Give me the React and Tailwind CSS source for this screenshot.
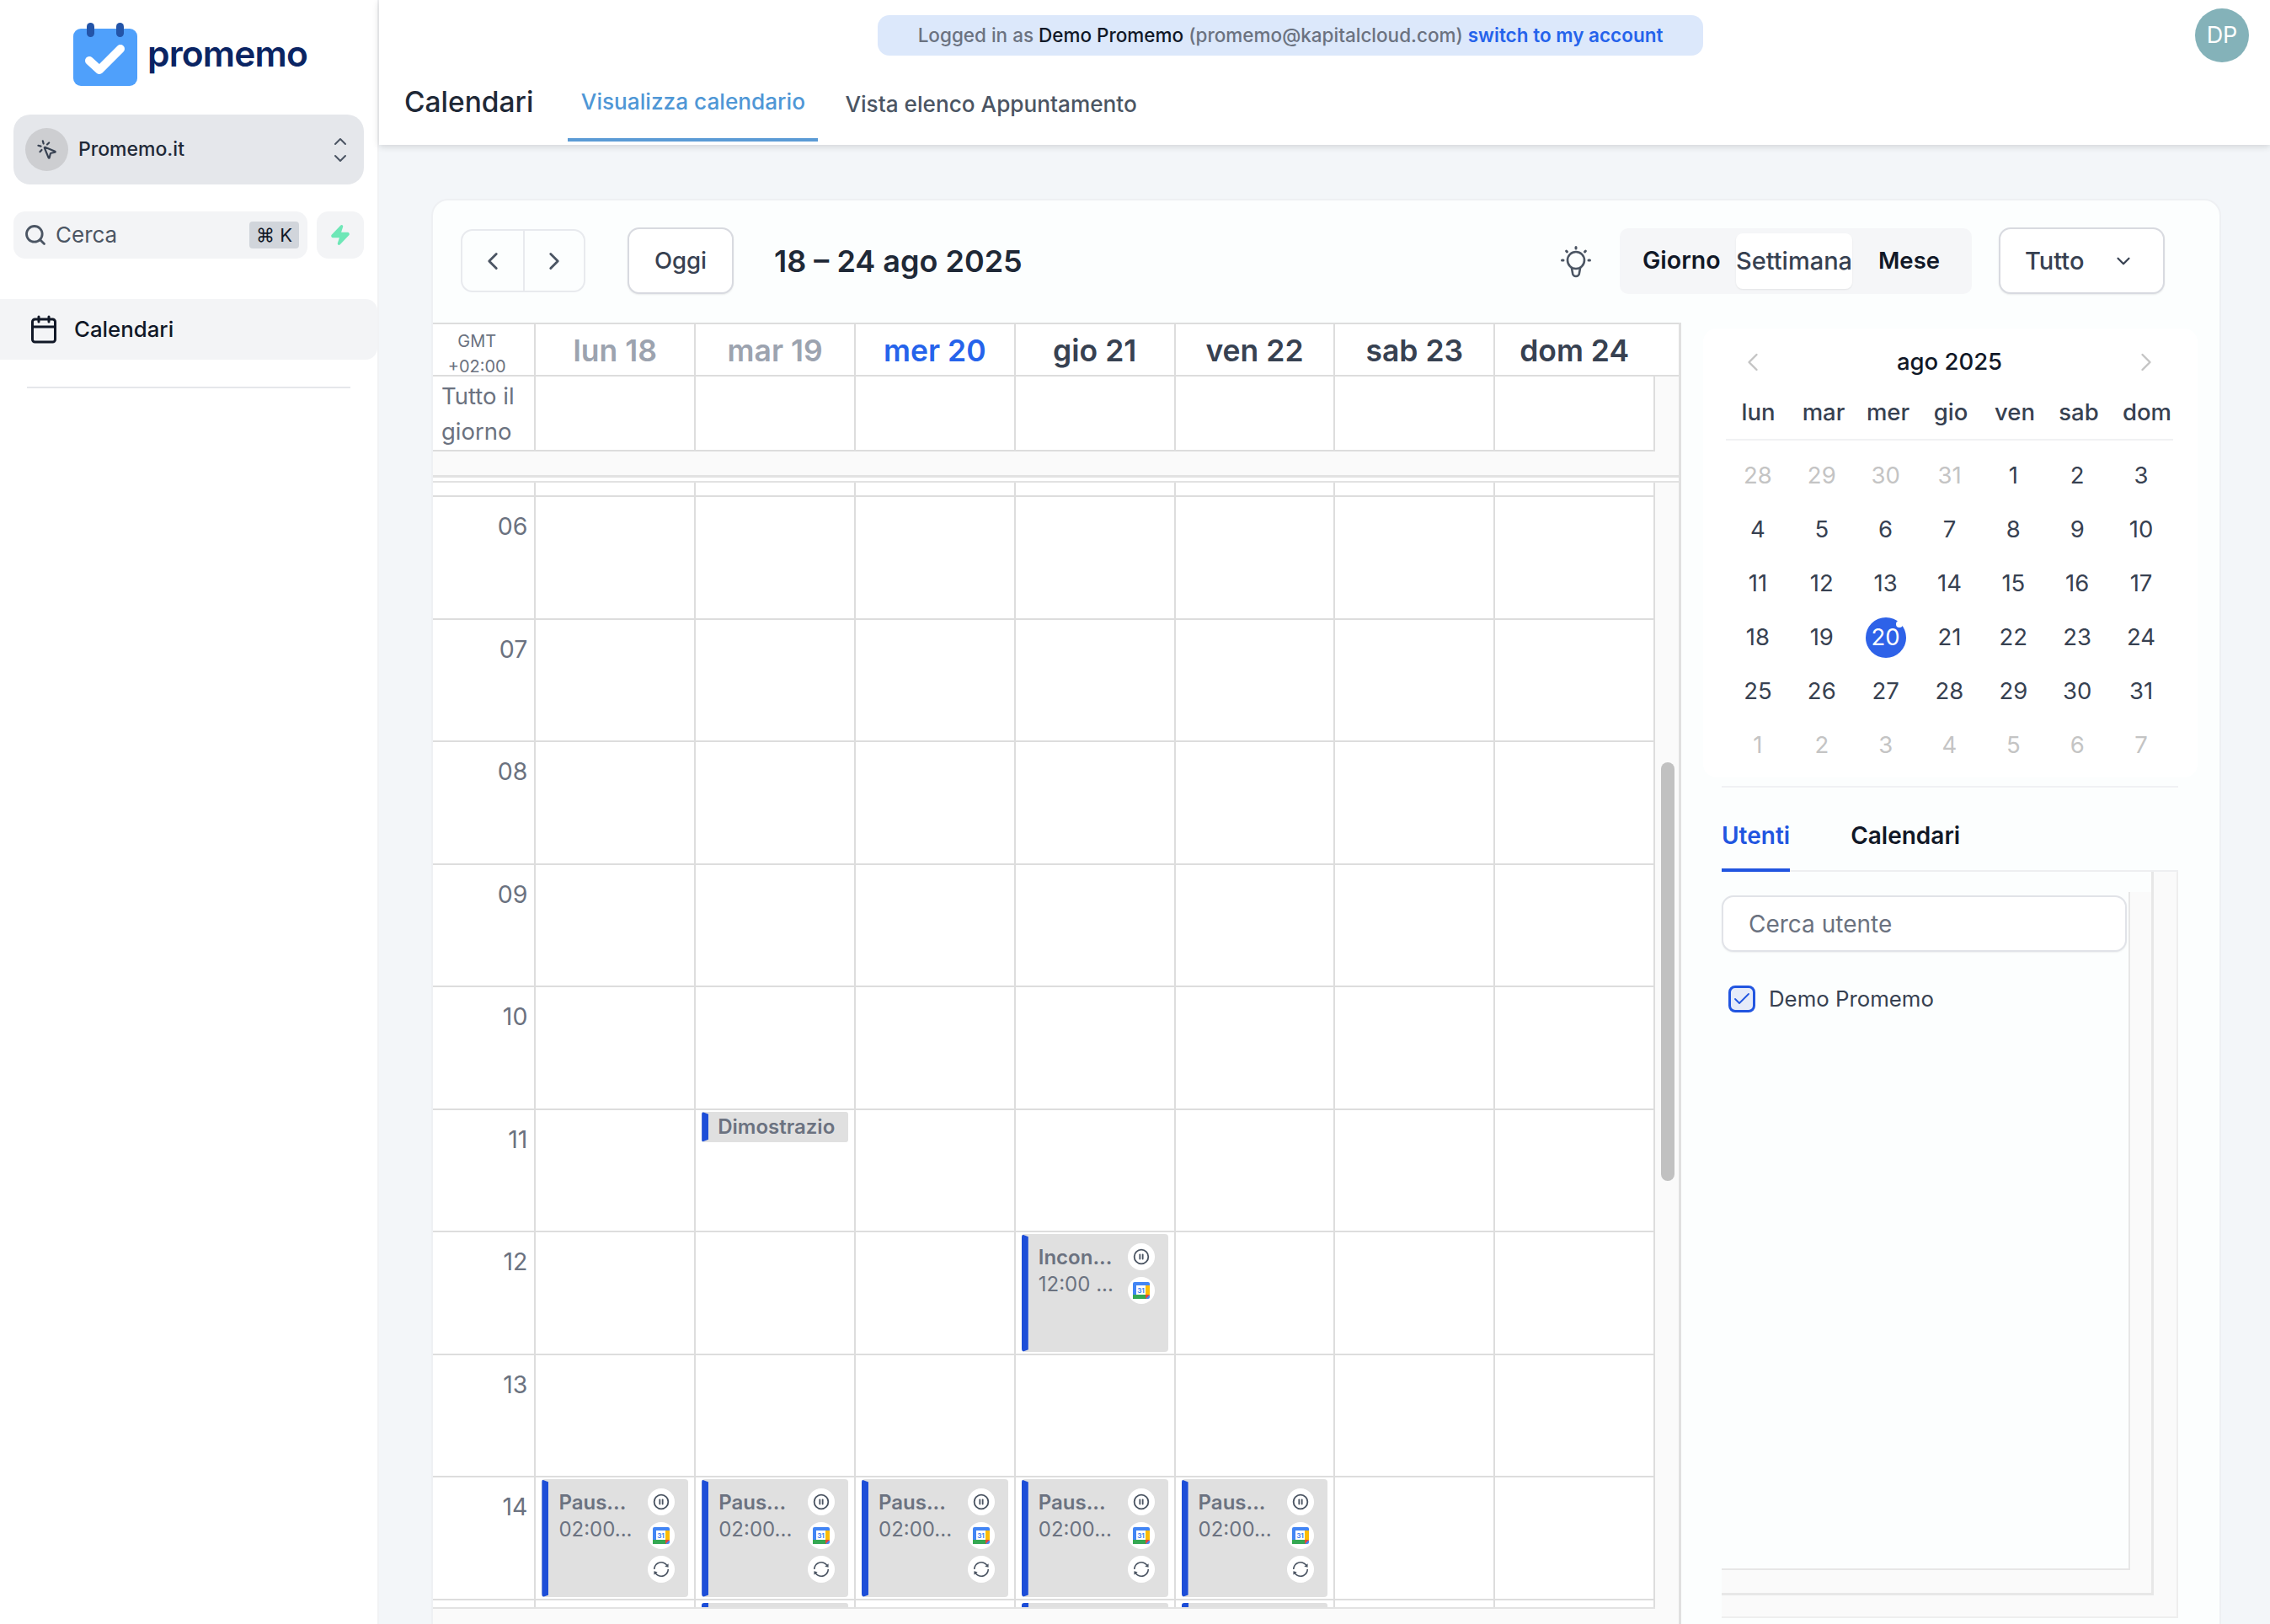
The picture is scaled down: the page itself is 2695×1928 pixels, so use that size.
import React from 'react';
import { Search, MousePointerClick, ChevronUp, ChevronDown, ChevronLeft, ChevronRight, Zap, Calendar, CirclePause, Check } from 'lucide-react';
import { AiOutlineSync } from 'react-icons/ai';

const HOURS = ['06', '07', '08', '09', '10', '11', '12', '13', '14'];
const DAYS = [
  { label: 'lun 18', color: 'text-[#9ca3af]' },
  { label: 'mar 19', color: 'text-[#9ca3af]' },
  { label: 'mer 20', color: 'text-[#2563eb]' },
  { label: 'gio 21', color: 'text-[#374151]' },
  { label: 'ven 22', color: 'text-[#374151]' },
  { label: 'sab 23', color: 'text-[#374151]' },
  { label: 'dom 24', color: 'text-[#374151]' },
];
const MONTH = [
  [['28', 1], ['29', 1], ['30', 1], ['31', 1], ['1'], ['2'], ['3']],
  [['4'], ['5'], ['6'], ['7'], ['8'], ['9'], ['10']],
  [['11'], ['12'], ['13'], ['14'], ['15'], ['16'], ['17']],
  [['18'], ['19'], ['20'], ['21'], ['22'], ['23'], ['24']],
  [['25'], ['26'], ['27'], ['28'], ['29'], ['30'], ['31']],
  [['1', 1], ['2', 1], ['3', 1], ['4', 1], ['5', 1], ['6', 1], ['7', 1]],
];

function GCal() {
  return (
    <svg width="20" height="20" viewBox="0 0 20 20">
      <rect x="0" y="0" width="20" height="20" rx="2" fill="#4285f4" />
      <rect x="15" y="4" width="5" height="12" fill="#fbbc04" />
      <rect x="0" y="15" width="16" height="5" fill="#34a853" />
      <path d="M15 15h5l-5 5z" fill="#ea4335" />
      <rect x="4" y="4" width="11" height="11" fill="#ffffff" />
      <text x="9.5" y="12.5" fontSize="8" fontWeight="700" textAnchor="middle" fill="#4285f4" fontFamily="Inter, sans-serif">31</text>
    </svg>
  );
}

function Bulb() {
  return (
    <svg width="40" height="40" viewBox="0 0 40 40" className="ml-[637px] shrink-0 text-[#4b5563]" fill="none" stroke="currentColor" strokeLinecap="round">
      <circle cx="20" cy="19" r="10" strokeWidth="2.6" />
      <path d="M15 28.5 L16 34 A4 4 0 0 0 24 34 L25 28.5" strokeWidth="2.6" />
      <path d="M20 3.5v1.4M8.6 8l.9 1M31.4 8l-.9 1M3.5 19H5M35 19h1.5" strokeWidth="3" />
    </svg>
  );
}

function Badge({ children }) {
  return <div className="w-[32px] h-[32px] rounded-full bg-white flex items-center justify-center text-[#4b5563]">{children}</div>;
}

const BAR = 'w-[8px] shrink-0 bg-[#1d4ed8] [clip-path:polygon(0_0,100%_3px,100%_calc(100%-3px),0_100%)]';

function Event({ title, time, sync }) {
  return (
    <div className="absolute left-[7px] right-[7px] top-[2px] h-[140px] rounded-[4px] bg-[#e0e0e0] ring-2 ring-white overflow-hidden flex z-10">
      <div className={BAR} />
      <div className="flex-1 pl-[12px] pt-[12px] text-[24px] leading-[32px] text-[#6b7280]">
        <div className="font-semibold whitespace-nowrap">{title}</div>
        <div className="whitespace-nowrap">{time}</div>
      </div>
      <div className="w-[48px] shrink-0 pt-[11px] flex flex-col gap-[8px]">
        <Badge><CirclePause size={20} strokeWidth={2.2} /></Badge>
        <Badge><GCal /></Badge>
        {sync && <Badge><AiOutlineSync size={22} /></Badge>}
      </div>
    </div>
  );
}

function cellEvent(hour, day) {
  if (hour === '11' && day === 1) {
    return (
      <div className="absolute left-[7px] right-[7px] top-[2px] h-[36px] rounded-[3px] bg-[#e0e0e0] flex overflow-hidden z-10">
        <div className={BAR} />
        <div className="pl-[11px] text-[24px] leading-[36px] font-semibold text-[#6b7280] whitespace-nowrap">Dimostrazio</div>
      </div>
    );
  }
  if (hour === '12' && day === 3) return <Event title="Incon..." time="12:00 ..." />;
  if (hour === '14' && day < 5) return <Event title="Paus..." time="02:00..." sync />;
  return null;
}

function Sidebar() {
  return (
    <aside className="w-[450px] h-full shrink-0 bg-white flex flex-col border-r-2 border-[#f1f2f4]">
      <div className="h-[136px] shrink-0 pl-[87px] pt-[27px] flex items-start gap-[12px]">
        <svg width="76" height="75" viewBox="0 0 76 75" className="shrink-0">
          <rect x="0" y="7" width="76" height="68" rx="9" fill="#4fa0fb" />
          <rect x="16" y="0" width="9" height="17" rx="4.5" fill="#2354a8" />
          <rect x="51" y="0" width="9" height="17" rx="4.5" fill="#2354a8" />
          <path d="M19 45 L31 56 L56 31" fill="none" stroke="#ffffff" strokeWidth="10" strokeLinecap="round" strokeLinejoin="round" />
        </svg>
        <span className="font-semibold text-[42.5px] leading-[74px] tracking-[-0.02em] text-[#0a2463]">promemo</span>
      </div>
      <button className="mx-[16px] h-[83px] shrink-0 rounded-[20px] bg-[#e5e7eb] flex items-center pl-[14px] pr-[16px]">
        <span className="w-[51px] h-[51px] rounded-full bg-[#cdced1] flex items-center justify-center text-[#374151]">
          <MousePointerClick size={26} strokeWidth={2} />
        </span>
        <span className="ml-[12px] text-[23px] font-medium text-[#1f2937]">Promemo.it</span>
        <span className="ml-auto flex flex-col text-[#4b5563]">
          <ChevronUp size={24} strokeWidth={2} className="-mb-[2px]" />
          <ChevronDown size={24} strokeWidth={2} className="-mt-[2px]" />
        </span>
      </button>
      <div className="mx-[16px] mt-[32px] flex gap-[11px]">
        <div className="w-[349px] h-[56px] rounded-[14px] bg-[#f3f4f6] flex items-center pl-[12px] pr-[10px] text-[#4b5563]">
          <Search size={28} strokeWidth={2.4} />
          <span className="ml-[10px] text-[26px] leading-[30px] pb-[1px]">Cerca</span>
          <span className="ml-auto h-[32px] w-[59px] rounded-[4px] bg-[#d1d5db] flex items-center justify-center text-[22px] text-[#111827]">⌘ K</span>
        </div>
        <div className="w-[56px] h-[56px] rounded-[14px] bg-[#f3f4f6] flex items-center justify-center">
          <Zap size={26} className="text-[#6ee7b7] fill-[#6ee7b7]" />
        </div>
      </div>
      <div className="mt-[48px] h-[72px] rounded-r-[14px] bg-[#f3f4f6] flex items-center pl-[34px]">
        <Calendar size={36} strokeWidth={2} className="text-[#111827]" />
        <span className="ml-[18px] text-[25.8px] font-medium text-[#111827]">Calendari</span>
      </div>
      <div className="mx-[32px] mt-[32px] h-[2px] bg-[#e5e7eb]" />
    </aside>
  );
}

function Header() {
  return (
    <header className="relative z-20 h-[172px] shrink-0 bg-white shadow-[0_2px_8px_rgba(0,0,0,0.14)] flex flex-col">
      <div className="h-[92px] flex items-start shrink-0 relative">
        <div className="mt-[18px] ml-[592px] w-[980px] h-[48px] rounded-[14px] bg-[#dce8fb] flex items-center justify-center text-[22.5px] font-medium text-[#6b7280] whitespace-nowrap">
          <span>Logged in as&nbsp;</span><span className="text-[#111827]">Demo Promemo</span><span>&nbsp;(promemo@kapitalcloud.com)&nbsp;</span><span className="text-[#2563eb] font-semibold">switch to my account</span>
        </div>
        <div className="absolute top-[10px] left-[2156px] w-[64px] h-[64px] rounded-full bg-[#84b2b9] flex items-center justify-center text-white text-[27px]">DP</div>
      </div>
      <div className="flex-1 flex items-stretch pl-[30px]">
        <h1 className="text-[33.5px] font-medium text-[#1f2937] leading-[58px]">Calendari</h1>
        <div className="ml-[41px] w-[297px] h-[76px] border-b-[4px] border-[#5b9bd5] text-[26.2px] font-medium text-[#4f97d6] flex items-start justify-center pt-[12px] leading-[34px]">Visualizza calendario</div>
        <div className="ml-[32px] text-[26.2px] font-medium text-[#4b5563] pt-[14px] leading-[36px]">Vista elenco Appuntamento</div>
      </div>
    </header>
  );
}

function Toolbar() {
  return (
    <div className="h-[145px] shrink-0 flex items-center pl-[33px] pb-[2px] text-[27.5px]">
      <div className="flex w-[148px] h-[75px] rounded-[14px] border-2 border-[#e8eaee] text-[#4b5563]">
        <div className="w-[74px] border-r-2 border-[#e8eaee] flex items-center justify-center"><ChevronLeft size={34} strokeWidth={2} /></div>
        <div className="flex-1 flex items-center justify-center"><ChevronRight size={34} strokeWidth={2} /></div>
      </div>
      <div className="ml-[50px] w-[126px] h-[79px] rounded-[14px] border-2 border-[#d8dae0] bg-white shadow-[0_1px_2px_rgba(0,0,0,0.08)] flex items-center justify-center font-medium text-[#374151]">Oggi</div>
      <div className="ml-[48px] w-[295px] text-[36px] font-semibold text-[#1f2937] whitespace-nowrap">18 – 24 ago 2025</div>
      <Bulb />
      <div className="ml-[32px] w-[418px] h-[78px] rounded-[10px] bg-[#f5f6f8] flex items-center pl-[27px] font-semibold text-[#111827]">
        <span className="w-[111px] text-[28.5px]">Giorno</span>
        <span className="w-[138px] h-[66px] rounded-[8px] bg-white shadow-[0_1px_2px_rgba(0,0,0,0.08)] flex items-center justify-center font-medium text-[29px] text-[#374151]">Settimana</span>
        <span className="ml-[31px]">Mese</span>
      </div>
      <div className="ml-[32px] w-[197px] h-[79px] rounded-[14px] border-2 border-[#d8dae0] bg-white shadow-[0_1px_2px_rgba(0,0,0,0.08)] flex items-center pl-[29px] text-[29px] font-medium text-[#374151]">
        Tutto
        <ChevronDown size={26} strokeWidth={2} className="ml-[34px]" />
      </div>
    </div>
  );
}

const COLS = 'grid grid-cols-[122.4px_repeat(7,189.8px)]';

function WeekGrid() {
  return (
    <div className="w-[1482px] shrink-0 h-full flex flex-col border-r-[3px] border-[#e0e0e0] bg-[#fafafa] text-[27.5px]">
      <div className="grid grid-cols-[122.4px_repeat(6,189.8px)_1fr] h-[64px] shrink-0 border-t-2 border-b-2 border-[#dddddd] bg-white">
        <div className="border-r-2 border-[#dddddd] pr-[16px] pt-[5px] text-center text-[20px] leading-[30px] text-[#6b7280]">GMT<br />+02:00</div>
        {DAYS.map((d, i) => (
          <div key={d.label} className={`${i < 6 ? 'border-r-2 border-[#dddddd]' : 'pr-[30px]'} flex items-center justify-center pb-[2px] text-[35.5px] font-semibold ${d.color}`}>{d.label}</div>
        ))}
      </div>
      <div className={`${COLS} h-[89px] shrink-0 bg-white w-[1451px] border-b-2 border-[#dddddd]`}>
        <div className="border-r-2 border-[#dddddd] pl-[10px] pt-[2px] text-[#6b7280] leading-[42px]">Tutto il<br />giorno</div>
        {DAYS.map((d) => <div key={d.label} className="border-r-2 border-[#dddddd]" />)}
      </div>
      <div className="h-[28px] shrink-0" />
      <div className="h-[9px] shrink-0 bg-white border-t-[3px] border-b-2 border-[#e2e2e2]" />
      <div className="flex-1 min-h-0 flex">
        <div className="w-[1451px] shrink-0">
          <div className={`${COLS} h-[17px] bg-white border-b-2 border-[#dddddd]`}>
            {Array.from({ length: 8 }, (_, i) => <div key={i} className="border-r-2 border-[#dddddd]" />)}
          </div>
          {HOURS.map((h) => (
            <div key={h} className={`${COLS} h-[145.56px] bg-white border-b-2 border-[#dddddd]`}>
              <div className="border-r-2 border-[#dddddd] pr-[8px] pt-[15px] text-right text-[28.5px] text-[#6b7280] leading-[40px]">{h}</div>
              {DAYS.map((d, i) => <div key={d.label} className="relative border-r-2 border-[#dddddd]">{cellEvent(h, i)}</div>)}
            </div>
          ))}
          <div className={`${COLS} h-[10px] bg-white border-b-2 border-[#e2e2e2] overflow-hidden`}>
            {[0, 1, 2, 3, 4, 5, 6, 7].map((i) => (
              <div key={i} className="relative border-r-2 border-[#dddddd]">
                {[2, 4, 5].includes(i) && <div className="absolute left-[7px] right-[7px] top-[3px] h-[8px] rounded-t-[3px] bg-[#e0e0e0] overflow-hidden"><div className="w-[8px] h-full bg-[#1d4ed8]" /></div>}
              </div>
            ))}
          </div>
        </div>
        <div className="flex-1 pl-[7px] pt-[332px]">
          <div className="w-[16px] h-[497px] rounded-[8px] bg-[#c1c1c1]" />
        </div>
      </div>
    </div>
  );
}

function MiniCalendar() {
  const names = ['lun', 'mar', 'mer', 'gio', 'ven', 'sab', 'dom'];
  return (
    <div className="mx-[26px] mt-[7px] h-[533px] rounded-[16px] bg-white pl-[27px] pr-[29px] text-[27.5px] text-[#374151]">
      <div className="h-[80px] flex items-center justify-between pl-[14px] pr-[14px] text-[#111827] font-medium">
        <ChevronLeft size={36} strokeWidth={1.6} className="text-[#c4c4c4]" />
        <span>ago 2025</span>
        <ChevronRight size={36} strokeWidth={1.6} className="text-[#c4c4c4]" />
      </div>
      <div className="h-[53px] border-b-2 border-[#f0f1f3]">
        <div className="grid grid-cols-[77px_78px_75px_74px_78px_74px_88px] w-[532px] font-medium leading-[39px] text-center whitespace-nowrap">
          {names.map((n) => <div key={n}>{n}</div>)}
        </div>
      </div>
      <div className="pt-[10px] grid grid-cols-7 auto-rows-[64px]">
        {MONTH.flat().map(([n, muted], i) => (
          <div key={i} className="flex items-center justify-center">
            {n === '20' && !muted ? (
              <span className="relative w-[48px] h-[48px] rounded-full bg-[#2e62e8] text-white flex items-center justify-center">
                20
                <span className="absolute top-[4px] right-[4px] w-[8px] h-[8px] rounded-full bg-white" />
              </span>
            ) : (
              <span className={muted ? 'text-[#c4c4c4]' : ''}>{n}</span>
            )}
          </div>
        ))}
      </div>
    </div>
  );
}

function SidePanel() {
  return (
    <div className="flex-1 min-w-0">
      <MiniCalendar />
      <div className="ml-[48px] w-[542px] mt-[10px] border-t-2 border-[#f0f1f4]">
        <div className="flex gap-[72px] border-b-2 border-[#eeeff1] h-[100px] text-[28px] font-semibold leading-[30px]">
          <div className="h-[100px] pt-[42px] border-b-4 border-[#2155e0] text-[#2155e0]">Utenti</div>
          <div className="pt-[42px] text-[#111827]">Calendari</div>
        </div>
        <div className="h-[886px] border-r-2 border-b-2 border-[#eeeeee] bg-[#fafafa]">
          <div className="w-[513px] h-[859px] border-r-[3px] border-b-[3px] border-[#e7e7e7] bg-[#fcfefe] pt-[24px] flex flex-col">
            <div className="flex-1 bg-[#fafafa]">
              <div className="w-[485px] h-[805px] border-r-2 border-b-2 border-[#e7e7e7] bg-[#fcfefe] pt-[4px]">
                <input placeholder="Cerca utente" readOnly className="w-[481px] h-[67px] rounded-[14px] border-2 border-[#e1e3e8] bg-white pl-[30px] text-[28px] shadow-[0_1px_2px_rgba(0,0,0,0.06)] placeholder:text-[#6b7280] outline-none" />
                <div className="mt-[40px] ml-[8px] flex items-center">
                  <span className="w-[32px] h-[32px] rounded-[8px] border-[3px] border-[#2155e0] bg-[#e6ebf9] flex items-center justify-center text-[#2155e0]">
                    <Check size={24} strokeWidth={1.8} />
                  </span>
                  <span className="ml-[16px] text-[25.8px] leading-[32px] text-[#374151]">Demo Promemo</span>
                </div>
              </div>
            </div>
          </div>
        </div>
      </div>
    </div>
  );
}

export default function App() {
  return (
    <div className="w-screen h-screen flex overflow-hidden bg-[#f3f6f9] font-['Inter',sans-serif]">
      <Sidebar />
      <div className="flex-1 min-w-0 flex flex-col">
        <Header />
        <main className="flex-1 min-h-0 pl-[62px] pt-[64px] overflow-hidden">
          <div className="w-[2125px] h-[1710px] rounded-[20px] border-2 border-[#eef0f3] bg-[#fcfefe] flex flex-col">
            <Toolbar />
            <div className="flex h-[1545px]">
              <WeekGrid />
              <SidePanel />
            </div>
          </div>
        </main>
      </div>
    </div>
  );
}
